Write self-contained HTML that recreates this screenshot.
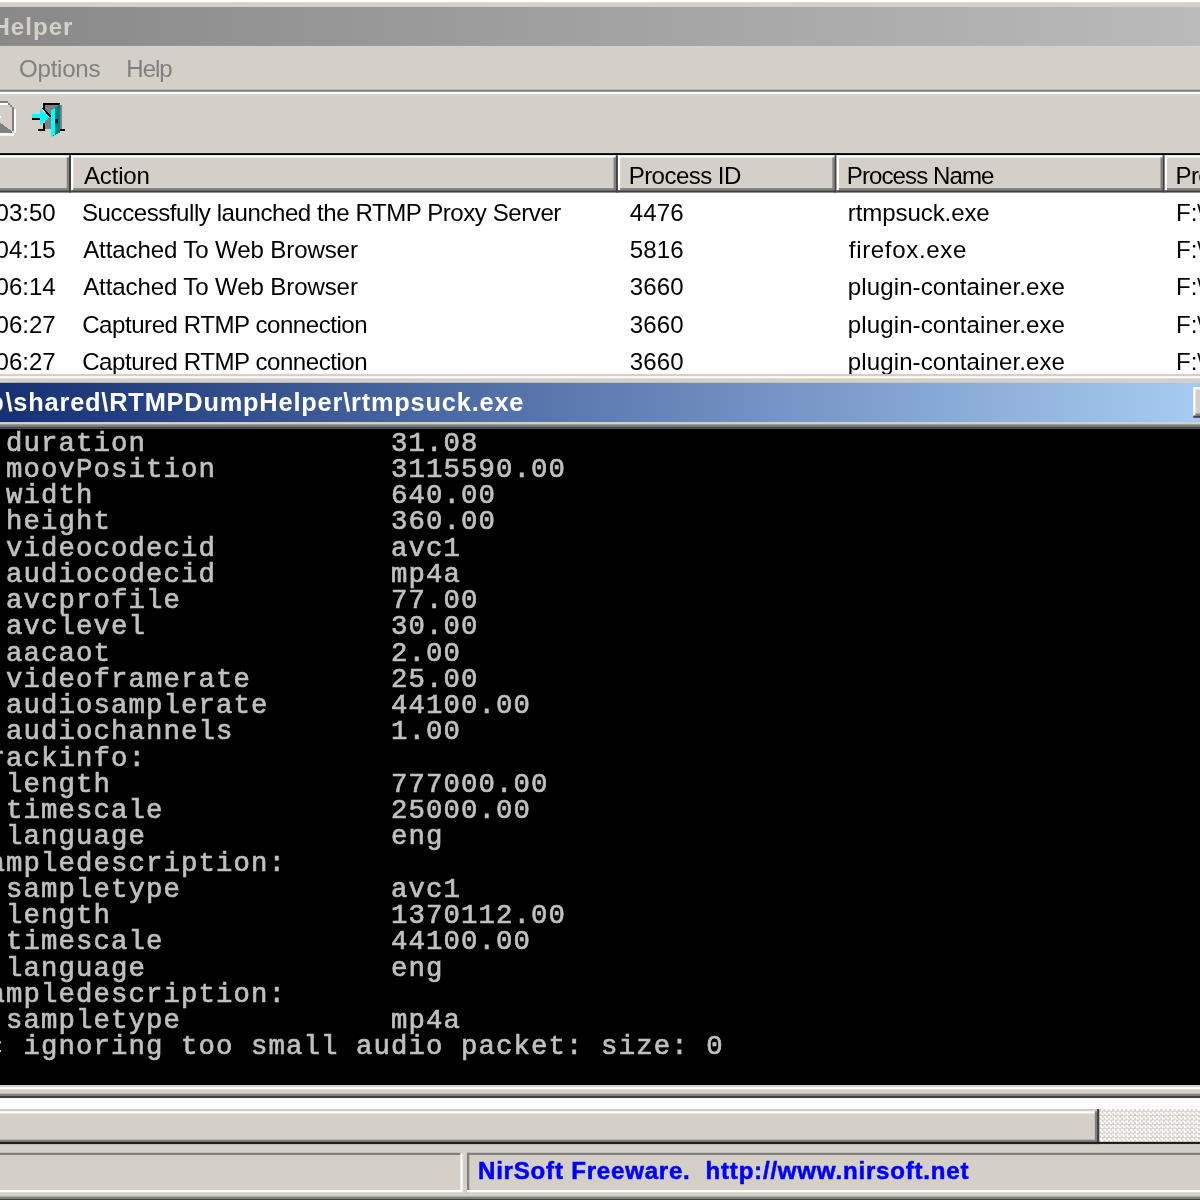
<!DOCTYPE html>
<html><head><meta charset="utf-8"><title>RTMPDumpHelper</title>
<style>
html,body{margin:0;padding:0;width:1200px;height:1200px;overflow:hidden;background:#d4d0c8}
#r{position:absolute;left:0;top:0;width:549px;height:549px;transform-origin:0 0;transform:translate(1.09px,0) scale(2.1875);background:#d4d0c8;will-change:transform}
.a{position:absolute}
.t{position:absolute;font-family:"Liberation Sans",sans-serif;white-space:pre}
</style></head><body><div id="r">
<div class="a" style="left:-3px;top:0px;width:560px;height:1px;background:#ffffff;"></div>
<div class="a" style="left:-100px;top:3px;width:714px;height:18px;background:linear-gradient(to right,#808080,#c0c0c0);"></div>
<div class="t" style="right:515.94px;top:6.688px;font-size:11px;line-height:11px;font-weight:bold;color:#d4d0c8;letter-spacing:0.46px;">Helper</div>
<div class="t" style="left:8.229px;top:25.688px;font-size:11px;line-height:11px;font-weight:normal;color:#808080;letter-spacing:-0.1143px;">Options</div>
<div class="t" style="left:57.246px;top:25.688px;font-size:11px;line-height:11px;font-weight:normal;color:#808080;letter-spacing:-0.4724px;">Help</div>
<div class="a" style="left:-3px;top:41px;width:560px;height:1px;background:#808080;"></div>
<div class="a" style="left:-3px;top:42px;width:560px;height:1px;background:#ffffff;"></div>
<svg class="a" style="left:14px;top:47px" width="16" height="16" viewBox="0 0 16 16" shape-rendering="crispEdges">
<rect x="6" y="1" width="7" height="11" fill="#808080"/>
<rect x="5" y="0" width="8" height="1" fill="#000"/>
<rect x="5" y="0" width="1" height="3" fill="#000"/>
<rect x="5" y="9" width="1" height="4" fill="#000"/>
<rect x="3" y="12" width="3" height="1" fill="#000"/>
<rect x="13" y="12" width="2" height="1" fill="#000"/>
<rect x="0" y="5" width="5" height="2" fill="#00ffff"/>
<rect x="0" y="7" width="4" height="1" fill="#000"/>
<polygon points="4,3 8.3,6.5 4,10" fill="#00ffff"/>
<polygon points="4.5,2.5 5.8,2.5 9,6 8.3,6.5" fill="#000"/>
<rect x="13" y="1" width="1" height="11" fill="#808080"/>
<polygon points="9,3.5 13,0.5 13,13.5 9,15.5" fill="#008080"/>
<polygon points="9,3.5 10.5,2.5 10.5,14.5 9,15.5" fill="#00ffff"/>
<rect x="10.5" y="7.5" width="1.5" height="1.5" fill="#000"/>
</svg>
<svg class="a" style="left:-4px;top:46px" width="12" height="16" viewBox="-4 46 12 16" shape-rendering="crispEdges">
<rect x="-4" y="46" width="7" height="1" fill="#808080"/>
<rect x="-4" y="47" width="7" height="1" fill="#fff"/>
<rect x="3" y="47" width="1" height="1" fill="#808080"/>
<rect x="4" y="48" width="1" height="1" fill="#808080"/>
<rect x="5" y="49" width="1" height="11" fill="#808080"/>
<rect x="6" y="50" width="1" height="11" fill="#fff"/>
<polygon points="-4,53.5 5,60 -4,60" fill="#808080"/>
<rect x="-1" y="60" width="6" height="1" fill="#808080"/>
<rect x="-1" y="61" width="7" height="1" fill="#fff"/>
<rect x="-1" y="53" width="1" height="1" fill="#fff"/>
</svg>
<div class="a" style="left:-3px;top:70px;width:560px;height:1px;background:#000;"></div>
<div class="a" style="left:-3px;top:88px;width:560px;height:83px;background:#ffffff;"></div>
<div class="a" style="left:-60px;top:71px;width:92px;height:17px;background:#d4d0c8;"></div>
<div class="a" style="left:-60px;top:71px;width:91px;height:1px;background:#ffffff;"></div>
<div class="a" style="left:-60px;top:71px;width:1px;height:16px;background:#ffffff;"></div>
<div class="a" style="left:30px;top:72px;width:1px;height:15px;background:#808080;"></div>
<div class="a" style="left:-59px;top:86px;width:90px;height:1px;background:#808080;"></div>
<div class="a" style="left:31px;top:71px;width:1px;height:17px;background:#404040;"></div>
<div class="a" style="left:-60px;top:87px;width:92px;height:1px;background:#404040;"></div>
<div class="a" style="left:32px;top:71px;width:250px;height:17px;background:#d4d0c8;"></div>
<div class="a" style="left:32px;top:71px;width:249px;height:1px;background:#ffffff;"></div>
<div class="a" style="left:32px;top:71px;width:1px;height:16px;background:#ffffff;"></div>
<div class="a" style="left:280px;top:72px;width:1px;height:15px;background:#808080;"></div>
<div class="a" style="left:33px;top:86px;width:248px;height:1px;background:#808080;"></div>
<div class="a" style="left:281px;top:71px;width:1px;height:17px;background:#404040;"></div>
<div class="a" style="left:32px;top:87px;width:250px;height:1px;background:#404040;"></div>
<div class="t" style="left:37.909px;top:74.689px;font-size:11px;line-height:11px;font-weight:normal;color:#000;letter-spacing:-0.0914px;">Action</div>
<div class="a" style="left:282px;top:71px;width:100px;height:17px;background:#d4d0c8;"></div>
<div class="a" style="left:282px;top:71px;width:99px;height:1px;background:#ffffff;"></div>
<div class="a" style="left:282px;top:71px;width:1px;height:16px;background:#ffffff;"></div>
<div class="a" style="left:380px;top:72px;width:1px;height:15px;background:#808080;"></div>
<div class="a" style="left:283px;top:86px;width:98px;height:1px;background:#808080;"></div>
<div class="a" style="left:381px;top:71px;width:1px;height:17px;background:#404040;"></div>
<div class="a" style="left:282px;top:87px;width:100px;height:1px;background:#404040;"></div>
<div class="t" style="left:286.903px;top:74.689px;font-size:11px;line-height:11px;font-weight:normal;color:#000;letter-spacing:-0.254px;">Process ID</div>
<div class="a" style="left:382px;top:71px;width:150px;height:17px;background:#d4d0c8;"></div>
<div class="a" style="left:382px;top:71px;width:149px;height:1px;background:#ffffff;"></div>
<div class="a" style="left:382px;top:71px;width:1px;height:16px;background:#ffffff;"></div>
<div class="a" style="left:530px;top:72px;width:1px;height:15px;background:#808080;"></div>
<div class="a" style="left:383px;top:86px;width:148px;height:1px;background:#808080;"></div>
<div class="a" style="left:531px;top:71px;width:1px;height:17px;background:#404040;"></div>
<div class="a" style="left:382px;top:87px;width:150px;height:1px;background:#404040;"></div>
<div class="t" style="left:386.629px;top:74.689px;font-size:11px;line-height:11px;font-weight:normal;color:#000;letter-spacing:-0.4239px;">Process Name</div>
<div class="a" style="left:532px;top:71px;width:168px;height:17px;background:#d4d0c8;"></div>
<div class="a" style="left:532px;top:71px;width:167px;height:1px;background:#ffffff;"></div>
<div class="a" style="left:532px;top:71px;width:1px;height:16px;background:#ffffff;"></div>
<div class="a" style="left:698px;top:72px;width:1px;height:15px;background:#808080;"></div>
<div class="a" style="left:533px;top:86px;width:166px;height:1px;background:#808080;"></div>
<div class="a" style="left:699px;top:71px;width:1px;height:17px;background:#404040;"></div>
<div class="a" style="left:532px;top:87px;width:168px;height:1px;background:#404040;"></div>
<div class="t" style="left:536.9px;top:74.689px;font-size:11px;line-height:11px;font-weight:normal;color:#000;letter-spacing:-0.3px;">Process Path</div>
<div class="t" style="right:524px;top:91.689px;font-size:11px;line-height:11px;font-weight:normal;color:#000;letter-spacing:0px;">1/5/2011 10:03:50</div>
<div class="t" style="left:36.994px;top:91.689px;font-size:11px;line-height:11px;font-weight:normal;color:#000;letter-spacing:-0.2024px;">Successfully launched the RTMP Proxy Server</div>
<div class="t" style="left:287.36px;top:91.689px;font-size:11px;line-height:11px;font-weight:normal;color:#000;letter-spacing:0.0457px;">4476</div>
<div class="t" style="left:387.086px;top:91.689px;font-size:11px;line-height:11px;font-weight:normal;color:#000;letter-spacing:-0.0499px;">rtmpsuck.exe</div>
<div class="t" style="left:537.1px;top:91.689px;font-size:11px;line-height:11px;font-weight:normal;color:#000;letter-spacing:0px;">F:\Program Files\Mozilla Firefox\rtmpsuck.exe</div>
<div class="t" style="right:524px;top:108.689px;font-size:11px;line-height:11px;font-weight:normal;color:#000;letter-spacing:0px;">1/5/2011 10:04:15</div>
<div class="t" style="left:37.543px;top:108.689px;font-size:11px;line-height:11px;font-weight:normal;color:#000;letter-spacing:-0.054px;">Attached To Web Browser</div>
<div class="t" style="left:287.36px;top:108.689px;font-size:11px;line-height:11px;font-weight:normal;color:#000;letter-spacing:0.0457px;">5816</div>
<div class="t" style="left:387.543px;top:108.689px;font-size:11px;line-height:11px;font-weight:normal;color:#000;letter-spacing:0.2971px;">firefox.exe</div>
<div class="t" style="left:537.1px;top:108.689px;font-size:11px;line-height:11px;font-weight:normal;color:#000;letter-spacing:0px;">F:\Program Files\Mozilla Firefox\firefox.exe</div>
<div class="t" style="right:524px;top:125.689px;font-size:11px;line-height:11px;font-weight:normal;color:#000;letter-spacing:0px;">1/5/2011 10:06:14</div>
<div class="t" style="left:37.543px;top:125.689px;font-size:11px;line-height:11px;font-weight:normal;color:#000;letter-spacing:-0.054px;">Attached To Web Browser</div>
<div class="t" style="left:287.36px;top:125.689px;font-size:11px;line-height:11px;font-weight:normal;color:#000;letter-spacing:0.0457px;">3660</div>
<div class="t" style="left:387.086px;top:125.689px;font-size:11px;line-height:11px;font-weight:normal;color:#000;letter-spacing:0.0433px;">plugin-container.exe</div>
<div class="t" style="left:537.1px;top:125.689px;font-size:11px;line-height:11px;font-weight:normal;color:#000;letter-spacing:0px;">F:\Program Files\Mozilla Firefox\plugin-container.exe</div>
<div class="t" style="right:524px;top:142.689px;font-size:11px;line-height:11px;font-weight:normal;color:#000;letter-spacing:0px;">1/5/2011 10:06:27</div>
<div class="t" style="left:37.086px;top:142.689px;font-size:11px;line-height:11px;font-weight:normal;color:#000;letter-spacing:-0.2107px;">Captured RTMP connection</div>
<div class="t" style="left:287.36px;top:142.689px;font-size:11px;line-height:11px;font-weight:normal;color:#000;letter-spacing:0.0457px;">3660</div>
<div class="t" style="left:387.086px;top:142.689px;font-size:11px;line-height:11px;font-weight:normal;color:#000;letter-spacing:0.0433px;">plugin-container.exe</div>
<div class="t" style="left:537.1px;top:142.689px;font-size:11px;line-height:11px;font-weight:normal;color:#000;letter-spacing:0px;">F:\Program Files\Mozilla Firefox\plugin-container.exe</div>
<div class="t" style="right:524px;top:159.689px;font-size:11px;line-height:11px;font-weight:normal;color:#000;letter-spacing:0px;">1/5/2011 10:06:27</div>
<div class="t" style="left:37.086px;top:159.689px;font-size:11px;line-height:11px;font-weight:normal;color:#000;letter-spacing:-0.2107px;">Captured RTMP connection</div>
<div class="t" style="left:287.36px;top:159.689px;font-size:11px;line-height:11px;font-weight:normal;color:#000;letter-spacing:0.0457px;">3660</div>
<div class="t" style="left:387.086px;top:159.689px;font-size:11px;line-height:11px;font-weight:normal;color:#000;letter-spacing:0.0433px;">plugin-container.exe</div>
<div class="t" style="left:537.1px;top:159.689px;font-size:11px;line-height:11px;font-weight:normal;color:#000;letter-spacing:0px;">F:\Program Files\Mozilla Firefox\plugin-container.exe</div>
<div class="a" style="left:-3px;top:171px;width:560px;height:1px;background:#d4d0c8;"></div>
<div class="a" style="left:-3px;top:172px;width:560px;height:1px;background:#ffffff;"></div>
<div class="a" style="left:-3px;top:173px;width:560px;height:2px;background:#d4d0c8;"></div>
<div class="a" style="left:-43px;top:175px;width:588px;height:18px;background:linear-gradient(to right,#0a246a,#a6caf0);"></div>
<div class="a" style="left:545px;top:175px;width:20px;height:18px;background:#a6caf0;"></div>
<div class="t" style="left:2.0px;top:178.181px;font-size:11.6px;line-height:11.6px;font-weight:bold;color:#ffffff;letter-spacing:0.37px;">\shared\RTMPDumpHelper\rtmpsuck.exe</div>
<div class="t" style="right:547.37px;top:178.181px;font-size:11.6px;line-height:11.6px;font-weight:bold;color:#ffffff;letter-spacing:0.37px;">C:\Documents and Settings\User\Desktop</div>
<div class="a" style="left:545px;top:177px;width:16px;height:14px;background:#d4d0c8;"></div>
<div class="a" style="left:545px;top:177px;width:15px;height:1px;background:#ffffff;"></div>
<div class="a" style="left:545px;top:177px;width:1px;height:13px;background:#ffffff;"></div>
<div class="a" style="left:546px;top:189px;width:14px;height:1px;background:#808080;"></div>
<div class="a" style="left:559px;top:178px;width:1px;height:12px;background:#808080;"></div>
<div class="a" style="left:545px;top:190px;width:16px;height:1px;background:#404040;"></div>
<div class="a" style="left:560px;top:177px;width:1px;height:14px;background:#404040;"></div>
<div class="a" style="left:-3px;top:193px;width:560px;height:1px;background:#d4d0c8;"></div>
<div class="a" style="left:-3px;top:194px;width:560px;height:1px;background:#808080;"></div>
<div class="a" style="left:-3px;top:195px;width:560px;height:1px;background:#404040;"></div>
<div class="a" style="left:-3px;top:196px;width:560px;height:300px;background:#000;"></div>
<div class="a" style="left:-1.5px;top:475.5px;width:1px;height:1.2px;background:#c0c0c0;"></div>
<div class="a" style="left:-1.5px;top:479.5px;width:1px;height:1.2px;background:#c0c0c0;"></div>
<div class="a" style="left:-61.75px;top:197.2px;font-family:'Liberation Mono',monospace;font-size:12.5px;letter-spacing:0.5px;-webkit-text-stroke:0.3px #c0c0c0;line-height:12px;color:#c0c0c0;white-space:pre">INFO:   duration              31.08
INFO:   moovPosition          3115590.00
INFO:   width                 640.00
INFO:   height                360.00
INFO:   videocodecid          avc1
INFO:   audiocodecid          mp4a
INFO:   avcprofile            77.00
INFO:   avclevel              30.00
INFO:   aacaot                2.00
INFO:   videoframerate        25.00
INFO:   audiosamplerate       44100.00
INFO:   audiochannels         1.00
INFO: trackinfo:
INFO:   length                777000.00
INFO:   timescale             25000.00
INFO:   language              eng
INFO: sampledescription:
INFO:   sampletype            avc1
INFO:   length                1370112.00
INFO:   timescale             44100.00
INFO:   language              eng
INFO: sampledescription:
INFO:   sampletype            mp4a
WARNING: ignoring too small audio packet: size: 0</div>
<div class="a" style="left:-3px;top:496px;width:560px;height:1px;background:#d4d0c8;"></div>
<div class="a" style="left:-3px;top:497px;width:560px;height:1px;background:#ffffff;"></div>
<div class="a" style="left:-3px;top:498px;width:560px;height:2px;background:#d4d0c8;"></div>
<div class="a" style="left:-3px;top:500px;width:560px;height:1px;background:#808080;"></div>
<div class="a" style="left:-3px;top:501px;width:560px;height:1px;background:#404040;"></div>
<div class="a" style="left:-3px;top:502px;width:560px;height:5px;background:#ffffff;"></div>
<div class="a" style="left:502px;top:507px;width:60px;height:16px;background:repeating-conic-gradient(#fff 0 25%,#d4d0c8 0 50%) 0 0/2px 2px;"></div>
<div class="a" style="left:-20px;top:507px;width:522px;height:16px;background:#d4d0c8;"></div>
<div class="a" style="left:-20px;top:507px;width:521px;height:1px;background:#d4d0c8;"></div>
<div class="a" style="left:-20px;top:507px;width:1px;height:15px;background:#d4d0c8;"></div>
<div class="a" style="left:-19px;top:508px;width:519px;height:1px;background:#ffffff;"></div>
<div class="a" style="left:-19px;top:508px;width:1px;height:13px;background:#ffffff;"></div>
<div class="a" style="left:-19px;top:521px;width:520px;height:1px;background:#808080;"></div>
<div class="a" style="left:500px;top:508px;width:1px;height:14px;background:#808080;"></div>
<div class="a" style="left:-20px;top:522px;width:522px;height:1px;background:#404040;"></div>
<div class="a" style="left:501px;top:507px;width:1px;height:16px;background:#404040;"></div>
<div class="a" style="left:-3px;top:522px;width:560px;height:1px;background:#202020;"></div>
<div class="a" style="left:-20px;top:527px;width:231px;height:1px;background:#808080;"></div>
<div class="a" style="left:-20px;top:527px;width:1px;height:18px;background:#808080;"></div>
<div class="a" style="left:-20px;top:544px;width:231px;height:1px;background:#ffffff;"></div>
<div class="a" style="left:210px;top:527px;width:1px;height:18px;background:#ffffff;"></div>
<div class="a" style="left:213px;top:527px;width:487px;height:1px;background:#808080;"></div>
<div class="a" style="left:213px;top:527px;width:1px;height:18px;background:#808080;"></div>
<div class="a" style="left:213px;top:544px;width:487px;height:1px;background:#ffffff;"></div>
<div class="a" style="left:699px;top:527px;width:1px;height:18px;background:#ffffff;"></div>
<div class="t" style="left:218.0px;top:529.688px;font-size:11px;line-height:11px;font-weight:bold;color:#0000ff;letter-spacing:0.36px;-webkit-text-stroke:0.25px #0000ff;">NirSoft Freeware.  http://www.nirsoft.net</div>
<div class="a" style="left:-3px;top:547px;width:560px;height:1px;background:#808080;"></div>
<div class="a" style="left:-3px;top:548px;width:560px;height:2px;background:#404040;"></div>
</div></body></html>
